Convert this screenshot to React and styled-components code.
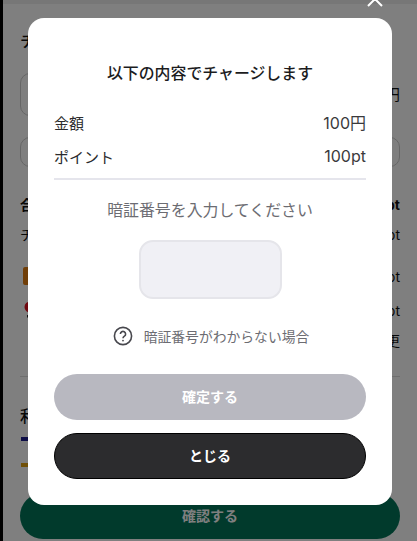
import React from 'react'
import styled, { createGlobalStyle } from 'styled-components'

const GlobalStyle = createGlobalStyle`
html, body {
  margin: 0;
  padding: 0;
  background: #fff;
}
body {
  font-family: Inter, "Noto Sans CJK JP", sans-serif;
}
`

const App = () => {
  return (
    <Screen>
      <GlobalStyle />
      <Edge />
      <Page>
        <SectionTitle>チャージ金額</SectionTitle>
        <AmountRow>
          <AmountBox />
          <Unit>円</Unit>
        </AmountRow>
        <WideBox />
        <SummaryRow $top={28} $bold>
          <span>合計</span>
          <span>100pt</span>
        </SummaryRow>
        <SummaryRow $top={12}>
          <span>チャージ</span>
          <span>100pt</span>
        </SummaryRow>
        <SummaryRow $top={24}>
          <BrandMark />
          <span>100pt</span>
        </SummaryRow>
        <SummaryRow $top={16}>
          <svg width="14" height="18" viewBox="0 0 14 18">
            <circle cx="10" cy="6" r="5.5" fill="#e01020" />
            <rect x="7" y="14" width="6" height="2.5" fill="#222" />
          </svg>
          <span>100pt</span>
        </SummaryRow>
        <ChangeLink>変更</ChangeLink>
        <PageDivider />
        <SectionTitle $top={27}>利用可能</SectionTitle>
        <ColorBar $color="#1a1a8c" $top={9} />
        <ColorBar $color="#e0a010" $top={22} />
        <ConfirmButton>確認する</ConfirmButton>
      </Page>

      <Overlay />
      <CloseIcon viewBox="0 0 20 20">
        <path d="M3 3l14 14M17 3L3 17" />
      </CloseIcon>

      <Modal>
        <Title>以下の内容でチャージします</Title>
        <InfoRow>
          <span>金額</span>
          <Value>100円</Value>
        </InfoRow>
        <InfoRow>
          <span>ポイント</span>
          <Value>100pt</Value>
        </InfoRow>
        <Divider />
        <Prompt>暗証番号を入力してください</Prompt>
        <PinInput />
        <HelpRow>
          <svg width="20" height="20" viewBox="0 0 20 20" fill="none" stroke="#48484e">
            <circle cx="10" cy="10" r="8.6" strokeWidth="1.6" />
            <path d="M7.4 8a2.6 2.6 0 1 1 4 2.2c-.9.6-1.4 1-1.4 2" strokeWidth="1.6" />
            <circle cx="10" cy="14.6" r=".9" fill="#48484e" stroke="none" />
          </svg>
          <span>暗証番号がわからない場合</span>
        </HelpRow>
        <SubmitButton>確定する</SubmitButton>
        <CloseButton>とじる</CloseButton>
      </Modal>
    </Screen>
  )
}

export default App

const Screen = styled.div`
position: relative;
display: flex;
width: 417px;
height: 541px;
overflow: hidden;
background: #fff;
`
const Edge = styled.div`
flex: none;
width: 3px;
background: #000;
position: relative;
z-index: 2;
`
const Page = styled.div`
flex: 1;
display: flex;
flex-direction: column;
padding: 25px 17px 0 17px;
border-top: 4px solid #eee;
color: #111;
font-size: 15px;
`
const SectionTitle = styled.div`
margin-top: ${p => p.$top || 0}px;
font-size: 16px;
font-weight: 500;
line-height: 24px;
`
const AmountRow = styled.div`
display: flex;
align-items: center;
gap: 8px;
margin-top: 20px;
`
const AmountBox = styled.div`
flex: 1;
height: 41px;
border: 1px solid #ccc;
border-radius: 10px;
`
const Unit = styled.span`
font-size: 15px;
line-height: 24px;
`
const WideBox = styled.div`
height: 28px;
margin-top: 21px;
border: 1px solid #ccc;
border-radius: 10px;
`
const SummaryRow = styled.div`
display: flex;
justify-content: space-between;
align-items: center;
height: 18px;
margin-top: ${p => p.$top}px;
font-weight: ${p => (p.$bold ? 700 : 400)};
font-size: 14px;
`
const BrandMark = styled.div`
width: 18px;
height: 18px;
margin-left: 3px;
background: #e07c10;
border-radius: 2px;
`
const ChangeLink = styled.div`
align-self: flex-end;
margin-top: 13px;
font-size: 14px;
line-height: 18px;
`
const PageDivider = styled.div`
height: 1px;
margin-top: 26px;
background: #ddd;
`
const ColorBar = styled.div`
width: 30px;
height: 4px;
margin-top: ${p => p.$top}px;
margin-left: 1px;
background: ${p => p.$color};
`
const ConfirmButton = styled.div`
display: flex;
align-items: center;
justify-content: center;
box-sizing: border-box;
height: 46px;
margin-top: 26px;
padding-bottom: 2px;
border-radius: 23px;
background: #027458;
color: #fff;
font-size: 14px;
font-weight: 700;
`
const Overlay = styled.div`
position: absolute;
inset: 0;
background: rgba(0, 0, 0, 0.5);
`
const CloseIcon = styled.svg`
position: absolute;
top: -11px;
left: 365px;
width: 20px;
height: 20px;
fill: none;
stroke: #fff;
stroke-width: 2;
`
const Modal = styled.div`
position: absolute;
top: 18px;
left: 28px;
width: 364px;
height: 487px;
box-sizing: border-box;
display: flex;
flex-direction: column;
padding: 44px 26px 0;
background: #fff;
border-radius: 16px;
color: #1c1c1e;
`
const Title = styled.div`
text-align: center;
font-size: 15.9px;
font-weight: 500;
line-height: 24px;
margin-bottom: 19px;
`
const InfoRow = styled.div`
display: flex;
justify-content: space-between;
align-items: center;
height: 34px;
font-size: 15px;
color: #2c2c2e;
`
const Value = styled.span`
font-size: 16px;
color: #3a3a3c;
`
const Divider = styled.div`
height: 2px;
margin-top: 5px;
background: #e5e5ec;
`
const Prompt = styled.div`
margin-top: 19px;
text-align: center;
font-size: 15.9px;
line-height: 24px;
color: #6c6c72;
`
const PinInput = styled.div`
align-self: center;
box-sizing: border-box;
width: 143px;
height: 59px;
margin-top: 17px;
background: #f0f0f5;
border: 2px solid #e5e5ea;
border-radius: 14px;
`
const HelpRow = styled.div`
display: flex;
align-items: center;
justify-content: center;
gap: 11px;
height: 20px;
margin-top: 27px;
padding-left: 2px;
font-size: 13.8px;
color: #6c6c72;
`
const SubmitButton = styled.div`
display: flex;
align-items: center;
justify-content: center;
box-sizing: border-box;
height: 46px;
margin-top: 28px;
padding-bottom: 2px;
border-radius: 23px;
background: #b8b8c0;
color: #fff;
font-size: 14px;
font-weight: 700;
`
const CloseButton = styled.div`
display: flex;
align-items: center;
justify-content: center;
box-sizing: border-box;
height: 46px;
margin-top: 13px;
padding-bottom: 2px;
border-radius: 23px;
background: #2c2c2e;
border: 1px solid #000;
color: #fff;
font-size: 14px;
font-weight: 700;
`
